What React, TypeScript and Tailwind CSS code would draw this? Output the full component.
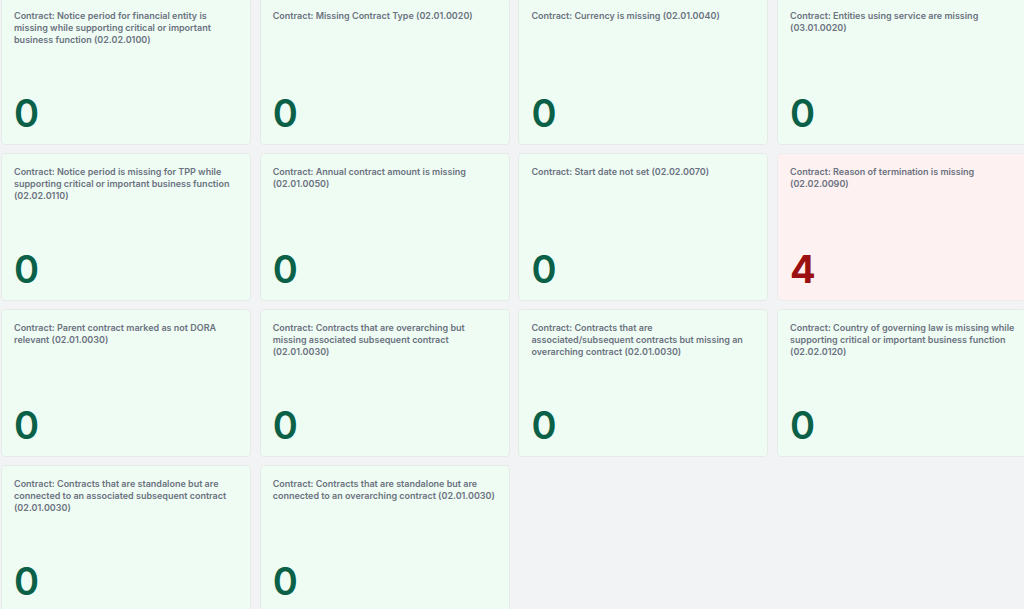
const checks = [
  { label: "Contract: Notice period for financial entity is missing while supporting critical or important business function (02.02.0100)", count: 0 },
  { label: "Contract: Missing Contract Type (02.01.0020)", count: 0 },
  { label: "Contract: Currency is missing (02.01.0040)", count: 0 },
  { label: "Contract: Entities using service are missing (03.01.0020)", count: 0 },
  { label: "Contract: Notice period is missing for TPP while supporting critical or important business function (02.02.0110)", count: 0 },
  { label: "Contract: Annual contract amount is missing (02.01.0050)", count: 0 },
  { label: "Contract: Start date not set (02.02.0070)", count: 0 },
  { label: "Contract: Reason of termination is missing (02.02.0090)", count: 4 },
  { label: "Contract: Parent contract marked as not DORA relevant (02.01.0030)", count: 0 },
  { label: "Contract: Contracts that are overarching but missing associated subsequent contract (02.01.0030)", count: 0 },
  { label: "Contract: Contracts that are associated/subsequent contracts but missing an overarching contract (02.01.0030)", count: 0 },
  { label: "Contract: Country of governing law is missing while supporting critical or important business function (02.02.0120)", count: 0 },
  { label: "Contract: Contracts that are standalone but are connected to an associated subsequent contract (02.01.0030)", count: 0 },
  { label: "Contract: Contracts that are standalone but are connected to an overarching contract (02.01.0030)", count: 0 },
];

function CheckCard({ label, count }: { label: string; count: number }) {
  const bad = count > 0;
  return (
    <div
      className={
        bad
          ? "flex h-[148px] flex-col justify-between rounded-[4px] border border-[#ebeced] bg-[#fef1f1] pt-[12px] pr-[10.5px] pb-[12px] pl-[12px]"
          : "flex h-[148px] flex-col justify-between rounded-[4px] border border-[#e6ebe8] bg-[#effcf4] pt-[12px] pr-[10.5px] pb-[12px] pl-[12px]"
      }
    >
      <p className="text-[9px] leading-[12px] font-semibold text-[#6b7280]">{label}</p>
      <span
        className={
          bad
            ? "text-[38px] leading-none font-bold text-[#9b1111]"
            : "text-[38px] leading-none font-semibold text-[#0a6147]"
        }
      >
        {count}
      </span>
    </div>
  );
}

export default function App() {
  return (
    <div className="h-[609px] w-[1024px] overflow-hidden bg-[#f2f3f5] font-['Inter',sans-serif]">
      <div className="-mt-[3px] ml-[1px] grid w-[1030px] grid-cols-[repeat(4,250px)] gap-x-[8.7px] gap-y-[8px]">
        {checks.map((c) => (
          <CheckCard key={c.label} label={c.label} count={c.count} />
        ))}
      </div>
    </div>
  );
}
